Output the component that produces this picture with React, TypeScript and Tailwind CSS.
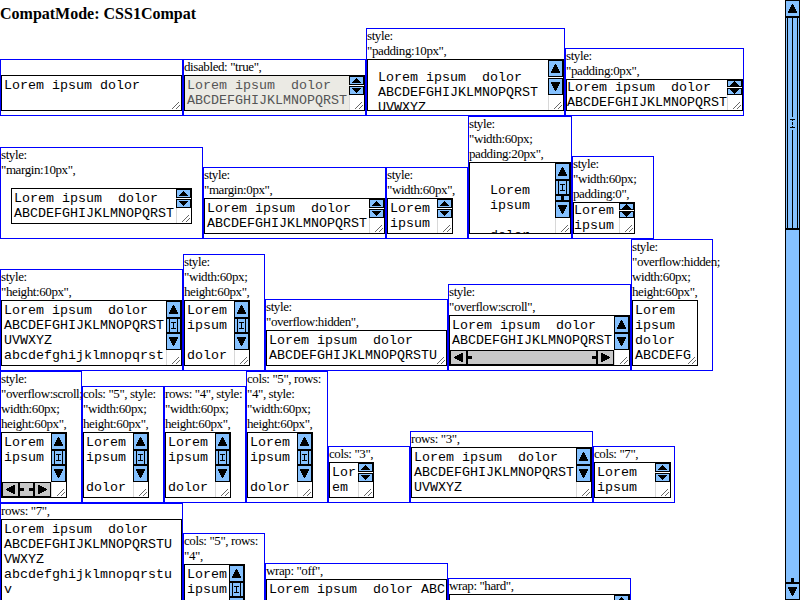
import type { ReactNode } from "react";

function Triangle({ dir, small }: { dir: "up" | "down" | "left" | "right"; small?: boolean }) {
  const paths = {
    up: "M4 0h1v1h1v2h1v2h1v2h1v2H0V7h1V5h1V3h1V1h1z",
    down: "M0 0h9v2H8v2H7v2H6v2H5v1H4V8H3V6H2V4H1V2H0z",
    left: "M0 4h1V3h2V2h2V1h2V0h2v9H7V8H5V7H3V6H1V5H0z",
    right: "M0 0h2v1h2v1h2v1h2v1h1v1H8v1H6v1H4v1H2v1H0z",
  };
  const smallUp = "M5 0h1v1h1v1h1v1h1v1h1v1H1V4h1V3h1V2h1V1h1z";
  const smallDown = "M1 0h9v1H9v1H8v1H7v1H6v1H5V4H4V3H3V2H2V1H1z";
  return (
    <svg width={small ? 11 : 9} height={small ? 5 : 9} shapeRendering="crispEdges" className="block shrink-0">
      <path d={small ? (dir === "up" ? smallUp : smallDown) : paths[dir]} fill="#000" />
    </svg>
  );
}

function Button({ dir, size }: { dir: "up" | "down"; size: string }) {
  return (
    <div className={`flex w-[15px] shrink-0 items-center justify-center border border-black bg-[#85c1ff] ${size}`}>
      <Triangle dir={dir} small={size !== "h-[17px]"} />
    </div>
  );
}

function Thumb() {
  return (
    <div className="flex h-[15px] w-[15px] shrink-0 justify-center border border-black bg-[#85c1ff]">
      <div className="flex w-[9px] items-center justify-center border-x border-black">
        <svg width="5" height="7" shapeRendering="crispEdges" className="block shrink-0">
          <path d="M0 0h5v1H3v5h2v1H0V6h2V1H0z" />
        </svg>
      </div>
    </div>
  );
}

type Bar = "none" | "small" | "tiny" | "big" | "bigGap" | "thumb" | "track";

function VBar({ kind }: { kind: Bar }) {
  if (kind === "none") return null;
  const size = kind === "small" ? "h-[9px]" : kind === "tiny" ? "h-[7px]" : "h-[17px]";
  const spaced = kind === "small" || kind === "tiny" || kind === "bigGap";
  return (
    <div className="absolute bottom-0 right-0 top-0 w-[15px] border-l border-[#d8d8d8] bg-white">
      <div className={`-ml-px flex flex-col ${spaced ? "gap-px" : ""}`}>
        <Button dir="up" size={size} />
        {(kind === "thumb" || kind === "track") && <Thumb />}
        {kind === "track" && (
          <div className="flex h-[6px] w-[15px] justify-center border border-black bg-[#85c1ff]">
            <div className="w-[3px] bg-black" />
          </div>
        )}
        <Button dir="down" size={size} />
      </div>
    </div>
  );
}

function HBar() {
  return (
    <div className="absolute bottom-0 left-0 right-[15px] flex h-[15px] bg-[#c8c8c8]">
      <div className="flex w-[17px] shrink-0 items-center justify-center border border-black"><Triangle dir="left" /></div>
      <div className="flex grow items-center justify-between border border-black">
        <i className="h-[3px] w-[4px] bg-black" />
        <i className="h-[3px] w-[4px] bg-black" />
      </div>
      <div className="flex w-[17px] shrink-0 items-center justify-center border border-black"><Triangle dir="right" /></div>
    </div>
  );
}

function Grip() {
  return (
    <svg className="absolute bottom-px right-px" width="8" height="8" shapeRendering="crispEdges" fill="#666">
      {[1, 2, 3, 4, 5, 6, 7].map((y) => (
        <rect key={y} x={7 - y} y={y} width="1" height="1" />
      ))}
      {[4, 5, 6, 7].map((y) => (
        <rect key={y} x={11 - y} y={y} width="1" height="1" />
      ))}
    </svg>
  );
}

interface FieldProps {
  label: string;
  labelH: string;
  cell?: string;
  box: string;
  pad?: string;
  bar?: Bar;
  text: string;
  disabled?: boolean;
  h?: boolean;
}

function Field({ label, labelH, cell = "w-[183px]", box, pad = "p-[2px]", bar = "none", text, disabled, h }: FieldProps) {
  return (
    <div className={`shrink-0 border border-[#00f] pb-1 ${cell}`}>
      <div className={`-translate-y-px whitespace-pre font-['Liberation_Serif',serif] text-[13px] leading-[15px] tracking-[-0.4px] ${labelH}`}>{label}</div>
      <div className={`relative overflow-hidden border border-black ${box} ${pad} ${disabled ? "bg-[#ebeae4] text-[#555]" : "bg-white"}`}>
        <div className="whitespace-pre font-['Liberation_Mono',monospace] text-[13.333px] leading-[15px]">{text}</div>
        <VBar kind={bar} />
        {h && <HBar />}
        <Grip />
      </div>
    </div>
  );
}

function Row({ children }: { children: ReactNode }) {
  return <div className="flex shrink-0 items-end">{children}</div>;
}

const two = "Lorem ipsum  dolor\nABCDEFGHIJKLMNOPQRST";
const narrow = "Lorem\nipsum\n\ndolor";
const narrowTwo = "Lorem\nipsum";

export default function App() {
  return (
    <div className="flex h-[600px] w-[800px] overflow-hidden bg-white text-black">
      <main className="flex h-[600px] w-[785px] flex-col overflow-hidden">
        <h1 className="h-[28px] shrink-0 pt-[5px] font-['Liberation_Serif',serif] text-[16px] font-bold leading-[18px]">CompatMode: CSS1Compat</h1>
        <Row>
          <Field label="" labelH="h-[15px]" box="h-[36px]" text="Lorem ipsum dolor" />
          <Field label={'disabled: "true",'} labelH="h-[15px]" box="h-[36px]" text={two} disabled bar="small" />
          <Field label={'style:\n"padding:10px",'} labelH="h-[30px]" cell="w-[199px]" box="h-[52px]" pad="p-[10px]" text={two + "\nUVWXYZ"} bar="bigGap" />
          <Field label={'style:\n"padding:0px",'} labelH="h-[30px]" cell="w-[179px]" box="h-[32px]" pad="p-0" text={two} bar="tiny" />
        </Row>
        <Row>
          <Field label={'style:\n"margin:10px",'} labelH="h-[30px]" cell="w-[203px]" box="m-[10px] h-[36px]" text={two} bar="small" />
          <Field label={'style:\n"margin:0px",'} labelH="h-[30px]" box="h-[36px]" text={two} bar="small" />
          <Field label={'style:\n"width:60px",'} labelH="h-[30px]" cell="w-[82px]" box="h-[36px] w-[66px]" text={narrowTwo} bar="small" />
          <Field label={'style:\n"width:60px;\npadding:20px",'} labelH="h-[45px]" cell="w-[104px]" box="h-[72px]" pad="p-[20px]" text={narrow} bar="track" />
          <Field label={'style:\n"width:60px;\npadding:0",'} labelH="h-[45px]" cell="w-[82px]" box="h-[32px] w-[62px]" pad="p-0" text={narrowTwo} bar="tiny" />
        </Row>
        <Row>
          <Field label={'style:\n"height:60px",'} labelH="h-[30px]" box="h-[66px]" text={two + "\nUVWXYZ\nabcdefghijklmnopqrst"} bar="thumb" />
          <Field label={'style:\n"width:60px;\nheight:60px",'} labelH="h-[45px]" cell="w-[82px]" box="h-[66px] w-[66px]" text={narrow} bar="thumb" />
          <Field label={'style:\n"overflow:hidden",'} labelH="h-[30px]" box="h-[36px]" text={two + "U"} />
          <Field label={'style:\n"overflow:scroll",'} labelH="h-[30px]" box="h-[51px]" text={two} bar="big" h />
          <Field label={'style:\n"overflow:hidden;\nwidth:60px;\nheight:60px",'} labelH="h-[60px]" cell="w-[82px]" box="h-[66px] w-[66px]" text={"Lorem\nipsum\ndolor\nABCDEFG"} />
        </Row>
        <Row>
          <Field label={'style:\n"overflow:scroll;\nwidth:60px;\nheight:60px",'} labelH="h-[60px]" cell="w-[82px]" box="h-[66px] w-[66px]" text={narrowTwo} bar="thumb" h />
          <Field label={'cols: "5", style:\n"width:60px;\nheight:60px",'} labelH="h-[45px]" cell="w-[82px]" box="h-[66px] w-[66px]" text={narrow} bar="thumb" />
          <Field label={'rows: "4", style:\n"width:60px;\nheight:60px",'} labelH="h-[45px]" cell="w-[82px]" box="h-[66px] w-[66px]" text={narrow} bar="thumb" />
          <Field label={'cols: "5", rows:\n"4", style:\n"width:60px;\nheight:60px",'} labelH="h-[60px]" cell="w-[82px]" box="h-[66px] w-[66px]" text={narrow} bar="thumb" />
          <Field label={'cols: "3",'} labelH="h-[15px]" cell="w-[82px]" box="h-[36px] w-[45px]" text={"Lor\nem"} bar="small" />
          <Field label={'rows: "3",'} labelH="h-[15px]" box="h-[51px]" text={two + "\nUVWXYZ"} bar="big" />
          <Field label={'cols: "7",'} labelH="h-[15px]" cell="w-[82px]" box="h-[36px] w-[77px]" text={narrowTwo} bar="small" />
        </Row>
        <Row>
          <Field label={'rows: "7",'} labelH="h-[15px]" box="h-[111px]" text={"Lorem ipsum  dolor\nABCDEFGHIJKLMNOPQRSTU\nVWXYZ\nabcdefghijklmnopqrstu\nv"} />
          <Field label={'cols: "5", rows:\n"4",'} labelH="h-[30px]" cell="w-[82px]" box="h-[66px] w-[61px]" text={narrowTwo} bar="thumb" />
          <Field label={'wrap: "off",'} labelH="h-[15px]" box="h-[51px]" text={"Lorem ipsum  dolor ABC"} />
          <Field label={'wrap: "hard",'} labelH="h-[15px]" box="h-[36px]" text=" " bar="small" />
        </Row>
      </main>
      <aside className="flex h-[600px] w-[15px] flex-col bg-[#85c1ff]">
        <div className="flex h-[17px] shrink-0 items-center justify-center border border-black"><Triangle dir="up" /></div>
        <div className="flex h-[212px] shrink-0 justify-center border border-black">
          <div className="flex w-[11px] flex-col items-center border-x border-black">
            <div className="w-px grow bg-black" />
            <svg width="5" height="13" shapeRendering="crispEdges" className="block shrink-0">
              <path d="M0 2h5v1H3v1H2V3H0zM2 5h1v3H2zM0 10h2V9h1v1h2v1H0z" />
            </svg>
            <div className="w-px grow bg-black" />
          </div>
        </div>
        <div className="flex grow items-end justify-center border border-black">
          <div className="h-[4px] w-[3px] bg-black" />
        </div>
        <div className="flex h-[17px] shrink-0 items-center justify-center border border-black"><Triangle dir="down" /></div>
      </aside>
    </div>
  );
}
